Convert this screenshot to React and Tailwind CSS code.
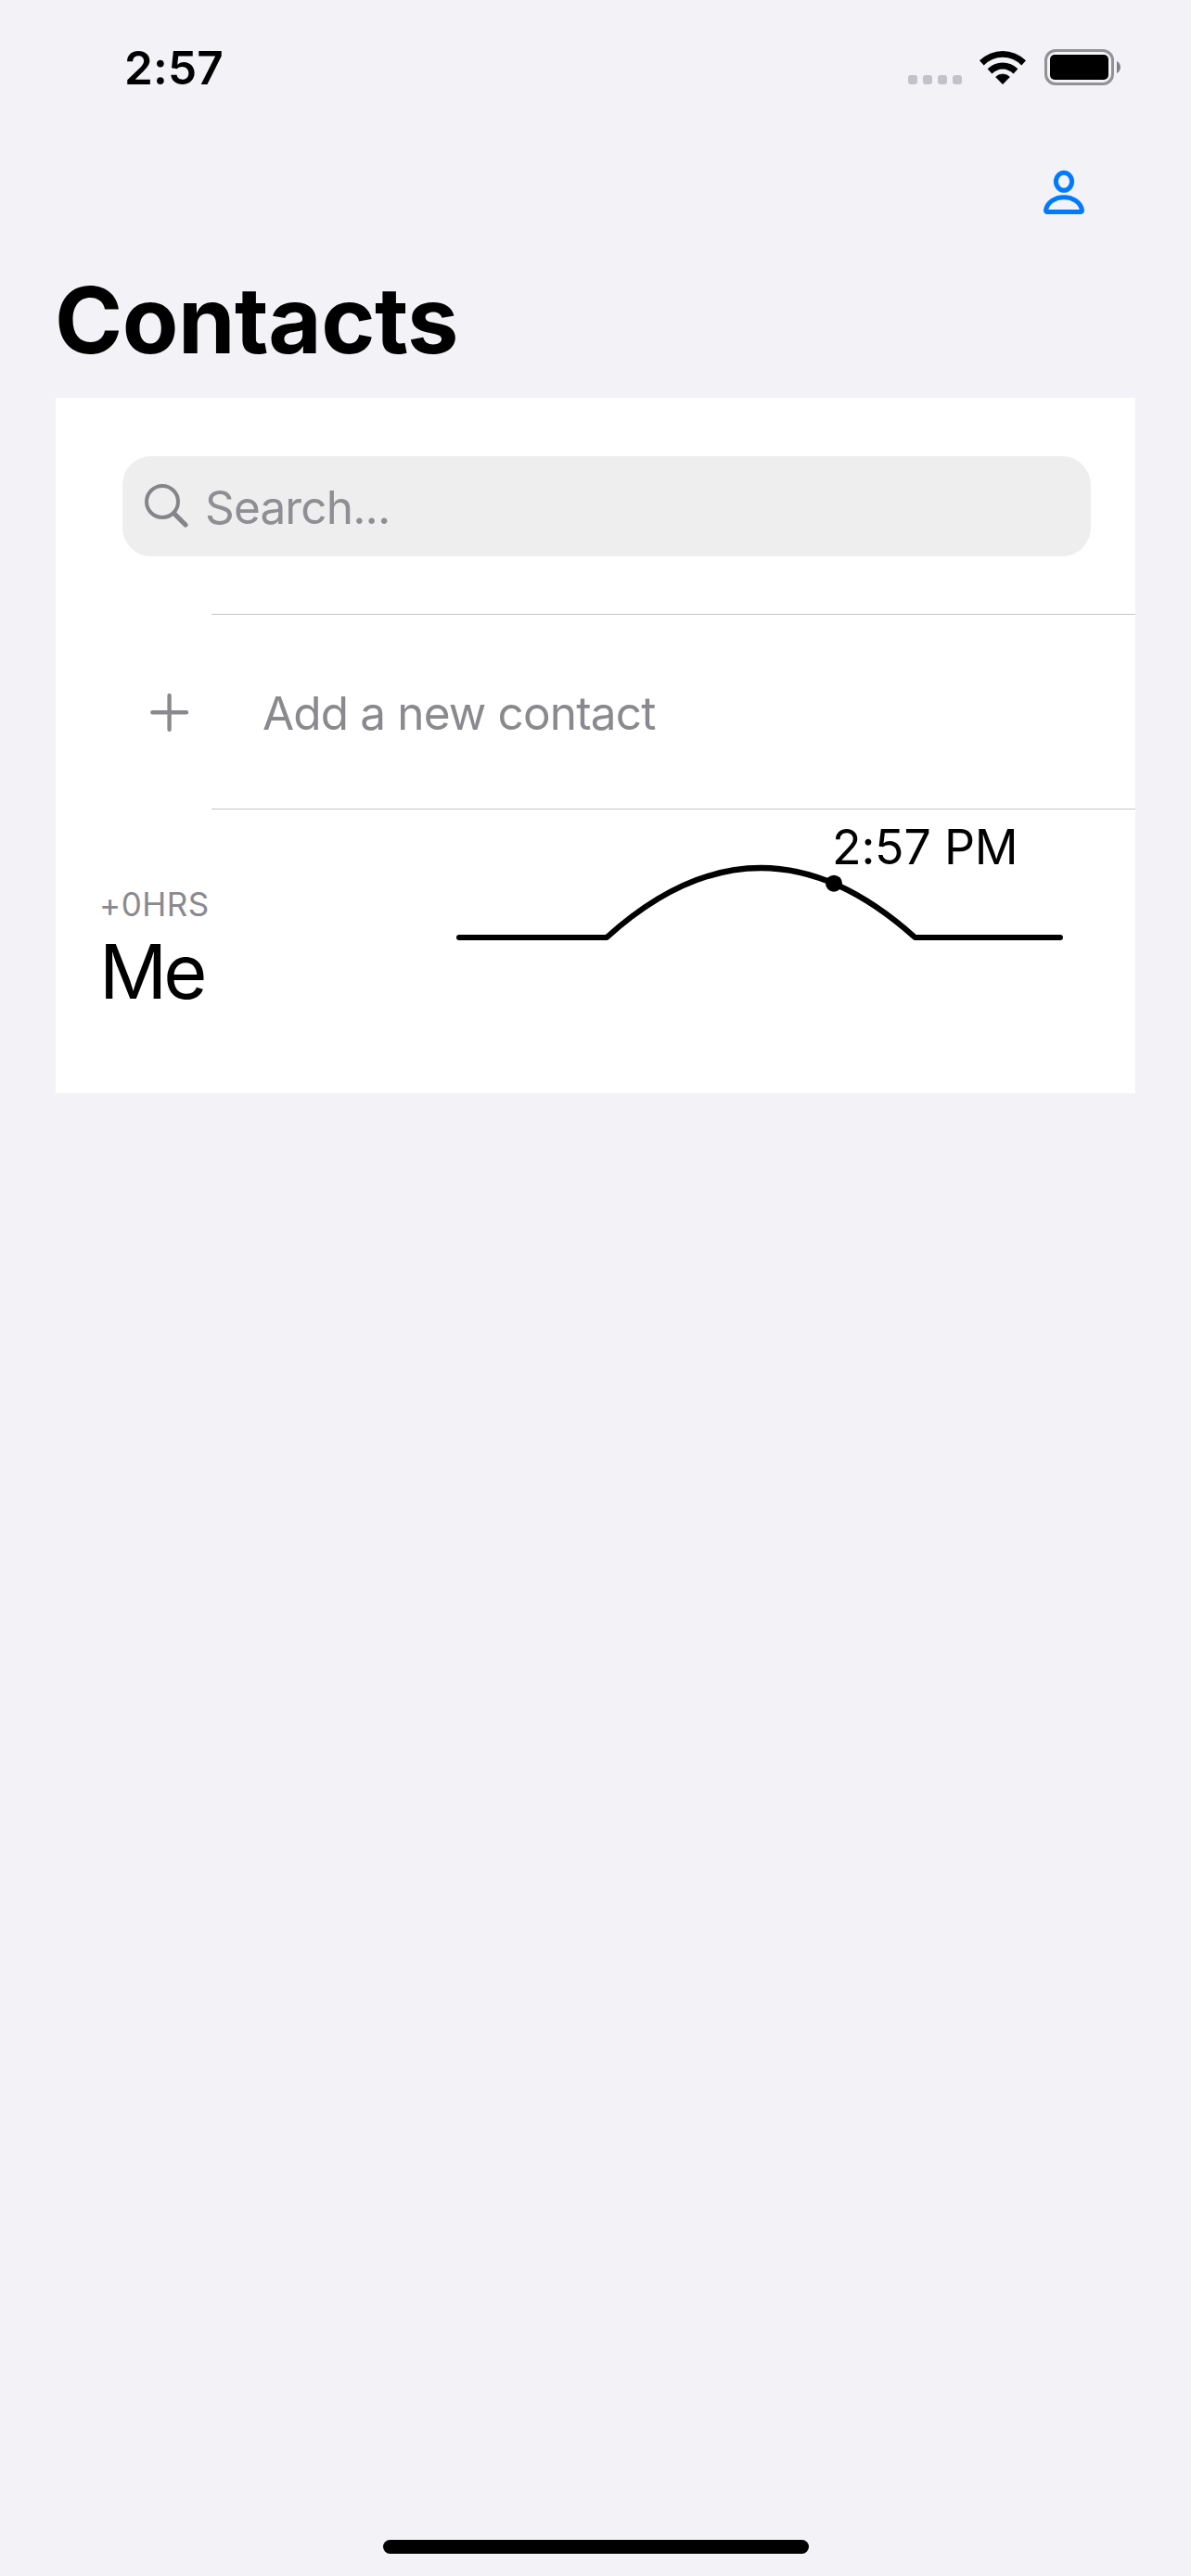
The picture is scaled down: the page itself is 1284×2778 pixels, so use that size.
import React from "react";

function WifiIcon() {
  return (
    <svg width="52" height="40" viewBox="0 0 52 40" className="shrink-0">
      <path d="M1 12.3A35.5 35.5 0 0 1 51 12.3L46.3 17.4A28 28 0 0 0 5.7 17.4Z" />
      <path d="M9.6 21.3A23 23 0 0 1 42.4 21.3L37.6 26.6A16 16 0 0 0 14.4 26.6Z" />
      <path d="M18.5 30A10.6 10.6 0 0 1 33.5 30L26 37.7Z" strokeWidth="0.6" stroke="black" strokeLinejoin="round" />
    </svg>
  );
}

function BatteryIcon() {
  return (
    <div className="flex items-center">
      <div className="h-[39px] w-[75px] rounded-[12px] border-3 border-[#929294] p-[3px]">
        <div className="h-full w-full rounded-[5px] bg-black" />
      </div>
      <svg width="4" height="13" viewBox="0 0 4 13" className="ml-[3px]" fill="#808082">
        <path d="M0 0C5.2 2.4 5.2 10.6 0 13Z" />
      </svg>
    </div>
  );
}

function StatusBar() {
  return (
    <header className="flex h-[132px] items-start justify-between pl-[134px] pr-[76px]">
      <span className="mt-[43px] text-[49.5px] leading-[60px] font-semibold tracking-[0.2px]">2:57</span>
      <div className="mt-[53px] flex">
        <div className="mt-7 mr-[18px] flex gap-1.5">
          {[0, 1, 2, 3].map((i) => (
            <span key={i} className="size-2.5 shrink-0 rounded-[3px] bg-[#c3c2c8]" />
          ))}
        </div>
        <WifiIcon />
        <div className="ml-[19px]">
          <BatteryIcon />
        </div>
      </div>
    </header>
  );
}

function PersonIcon() {
  return (
    <svg width="46" height="50" viewBox="0 0 46 50" fill="none" stroke="#007aff" strokeWidth="5" strokeLinejoin="round">
      <ellipse cx="23" cy="13.8" rx="8.6" ry="9.5" />
      <path d="M5.2 46.5H40.8Q42.5 46.5 42.5 44.6C41 36.4 32.8 30.7 23 30.7S5 36.4 3.5 44.6Q3.5 46.5 5.2 46.5Z" />
    </svg>
  );
}

function SearchField() {
  return (
    <div className="mr-12 ml-[72px] flex h-[108px] items-start rounded-[31px] bg-[#eeeeee]">
      <svg width="48" height="48" viewBox="0 0 48 48" className="mt-[29px] ml-[23px]" fill="none" stroke="#858589" strokeLinecap="round">
        <circle cx="20" cy="20" r="17" strokeWidth="4" />
        <path d="M32.6 32.6L45 45" strokeWidth="5.2" />
      </svg>
      <span className="mt-[25px] ml-[18px] text-[49.5px] leading-[60px] tracking-[-0.85px] text-[#8e8e93]">Search...</span>
    </div>
  );
}

function AddContactRow() {
  return (
    <div className="flex h-[209px]">
      <svg width="42" height="42" viewBox="0 0 42 42" className="mt-[84px] ml-[102px]" stroke="#8a8a8e" strokeWidth="4.4" strokeLinecap="round">
        <path d="M2.3 21.3H39M20.6 3V39.7" />
      </svg>
      <span className="mt-[76px] ml-[79px] text-[49.5px] leading-[60px] tracking-[-0.85px] text-[#8a8a8e]">Add a new contact</span>
    </div>
  );
}

function MeRow() {
  return (
    <div className="flex h-[306px] items-start">
      <div className="mt-[81px] ml-[47px] w-[373px]">
        <p className="text-[35px] leading-[42px] tracking-[0.5px] text-[#8a8a8e]">+0HRS</p>
        <p className="mt-0.5 text-[81px] leading-[100px] tracking-[-4px]">Me</p>
      </div>
      <div className="relative">
        <svg width="670" height="160" viewBox="0 0 670 160" fill="none">
          <path
            d="M15 138H174Q340 -12 506.5 138H663"
            stroke="black"
            strokeWidth="6"
            strokeLinecap="round"
            strokeLinejoin="round"
          />
          <circle cx="419" cy="79.7" r="9" fill="black" />
        </svg>
        <span className="absolute top-[9px] left-[417px] text-[51.8px] leading-[62px] tracking-[-0.2px] whitespace-nowrap">2:57 PM</span>
      </div>
    </div>
  );
}

function Divider() {
  return <div className="ml-[168px] h-px bg-[#c6c6c8]" />;
}

export default function App() {
  return (
    <div className="flex h-[2778px] w-[1284px] flex-col overflow-hidden bg-[#f2f2f7] font-['Inter',sans-serif] text-black">
      <StatusBar />
      <nav className="flex h-[132px] justify-end pt-[50px] pr-[114px]">
        <PersonIcon />
      </nav>
      <h1 className="mt-[21px] ml-[59px] text-[99px] leading-[120px] font-bold tracking-[-0.5px]">Contacts</h1>
      <main className="mx-[60px] mt-6 bg-white pt-[63px]">
        <SearchField />
        <div className="h-[62px]" />
        <Divider />
        <AddContactRow />
        <Divider />
        <MeRow />
      </main>
      <div className="mt-auto mb-6 ml-[413px] h-[15px] w-[459px] rounded-full bg-black" />
    </div>
  );
}
